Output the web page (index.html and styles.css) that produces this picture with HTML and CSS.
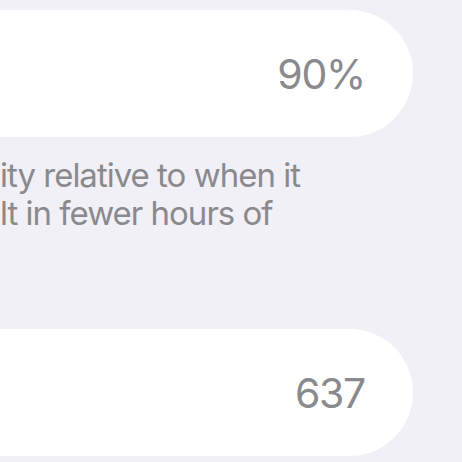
FILE: index.html
```html
<!DOCTYPE html>
<html lang="en">
<head>
    <meta charset="UTF-8">
    <meta name="viewport" content="width=device-width, initial-scale=1.0">
    <title>Battery Health</title>
    <link rel="stylesheet" href="styles.css">
</head>
<body>

  <div class="group">
    <div class="row">
      <span class="value">90%</span>
    </div>
  </div>

  <p class="note">
    <span class="line">ity relative to when it</span>
    <span class="line">lt in fewer hours of</span>
  </p>

  <div class="group second">
    <div class="row">
      <span class="value">637</span>
    </div>
  </div>

</body>
</html>
```

FILE: styles.css
```css
* {
    margin: 0;
    padding: 0;
    box-sizing: border-box;
}
body {
    width: 462px;
    height: 462px;
    overflow: hidden;
    background-color: #f1f0f6;
    font-family: Inter, "Noto Sans", sans-serif;
}
.group {
    margin-top: 10px;
    width: 413px;
}
.group.second {
    margin-top: 97px;
}
.row {
    height: 127px;
    background-color: #ffffff;
    border-radius: 0 64px 64px 0;
    display: flex;
    align-items: center;
    justify-content: flex-end;
    padding-right: 48px;
}
.value {
    font-size: 41px;
    letter-spacing: -1.3px;
    color: #8a8a8e;
}
.note {
    margin-top: 19px;
    font-size: 33px;
    letter-spacing: -1px;
    line-height: 38px;
    color: #8a8a8e;
}
.note .line {
    display: block;
    white-space: nowrap;
}
```
